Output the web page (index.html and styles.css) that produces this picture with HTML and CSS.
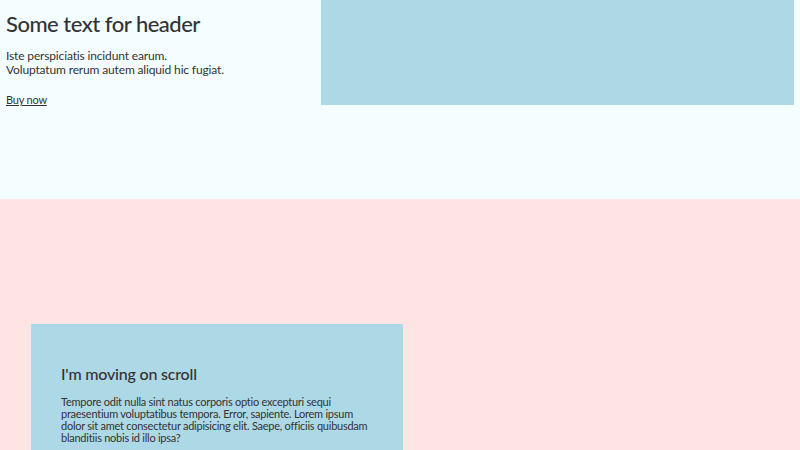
FILE: index.html
```html
<!DOCTYPE html>
<html lang="en">
<head>
    <meta charset="UTF-8">
    <meta name="viewport" content="width=device-width, initial-scale=1.0">
    <title>Parallax demo</title>
    <link rel="stylesheet" href="styles.css">
</head>
<body>
    <header class="hero">
        <div class="hero-text">
            <h1>Some text for header</h1>
            <p>Iste perspiciatis incidunt earum.<br>Voluptatum rerum autem aliquid hic fugiat.</p>
            <a href="#" class="buy">Buy now</a>
        </div>
        <div class="hero-image"></div>
    </header>

    <section class="scroller">
        <div class="moving-card">
            <h2>I'm moving on scroll</h2>
            <p>Tempore odit nulla sint natus corporis optio excepturi sequi praesentium voluptatibus tempora. Error, sapiente. Lorem ipsum dolor sit amet consectetur adipisicing elit. Saepe, officiis quibusdam blanditiis nobis id illo ipsa?</p>
        </div>
    </section>
</body>
</html>
```

FILE: styles.css
```css
body {
    margin: 0;
    font-family: Lato, "Open Sans", sans-serif;
    color: #333;
}
.hero {
    display: grid;
    grid-template-columns: 40% 60%;
    height: 199px;
    padding: 0 6px;
    background: #f4fdff;
}
.hero-text h1 {
    margin: 11px 0 0;
    font-size: 22px;
    font-weight: 500;
    letter-spacing: -0.5px;
    line-height: 26px;
}
.hero-text p {
    margin: 12px 0 0;
    font-size: 12px;
    letter-spacing: -0.15px;
    line-height: 14px;
}
.buy {
    display: inline-block;
    margin-top: 16px;
    font-size: 11px;
    letter-spacing: -0.2px;
    color: #333;
}
.hero-image {
    height: 105px;
    background: lightblue;
}
.scroller {
    height: 251px;
    padding: 125px 0 0 31px;
    box-sizing: border-box;
    overflow: hidden;
    background: #ffe4e4;
}
.moving-card {
    width: 372px;
    height: 200px;
    padding: 38px 30px;
    box-sizing: border-box;
    background: lightblue;
}
.moving-card h2 {
    margin: 0;
    font-size: 16px;
    font-weight: 500;
    letter-spacing: -0.2px;
    line-height: 24px;
}
.moving-card p {
    margin: 10px 0 0;
    font-size: 11px;
    letter-spacing: -0.25px;
    line-height: 12px;
}
```
